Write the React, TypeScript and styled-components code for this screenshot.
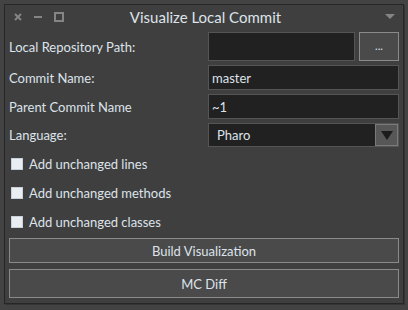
import styled, { createGlobalStyle } from 'styled-components'

// ── Pharo dark theme palette ───────────────────────────────
const C = {
  page: '#434343',
  win: '#3f3f3f',
  frame: '#262626',
  text: '#dde3ea',
  field: '#212121',
  fieldBorder: '#555555',
  button: '#4a4a4a',
  buttonBorder: '#8a8a8a',
  chrome: '#858585',
}

const Global = createGlobalStyle`
  html, body {
    margin: 0;
    padding: 0;
    background: ${C.page};
  }
  body {
    font-family: Lato, 'Noto Sans', sans-serif;
    font-size: 13px;
    color: ${C.text};
  }
`

const Screen = styled.div`
  width: 408px;
  height: 310px;
  padding: 4px 5px 0 4px;
  box-sizing: border-box;
`

const Window = styled.div`
  width: 400px;
  height: 300px;
  box-sizing: border-box;
  background: ${C.win};
  border: 1px solid ${C.frame};
  box-shadow: 1px 1px 0 #353535;
  display: flex;
  flex-direction: column;
`

const TitleBar = styled.div`
  height: 23px;
  display: flex;
  align-items: center;
  padding: 0 8px 0 9px;
  gap: 12px;
`

const Title = styled.div`
  flex: 1;
  text-align: center;
  font-size: 15px;
  margin-right: 38px;
`

const Body = styled.div`
  flex: 1;
  padding: 4px 4px 4px 4px;
  display: flex;
  flex-direction: column;
`

const Row = styled.div<{ $h: number; $gap?: number }>`
  height: ${(p) => p.$h}px;
  margin-bottom: ${(p) => p.$gap ?? 4}px;
  display: grid;
  grid-template-columns: 199px 1fr;
  align-items: center;
`

const Label = styled.div`
  white-space: nowrap;
`

const FieldWrap = styled.div`
  display: flex;
  gap: 4px;
  height: 100%;
`

const Field = styled.div`
  flex: 1;
  box-sizing: border-box;
  background: ${C.field};
  border: 1px solid ${C.fieldBorder};
  display: flex;
  align-items: center;
  padding: 0 3px;
`

const SmallButton = styled.div`
  width: 40px;
  box-sizing: border-box;
  background: ${C.button};
  border: 1px solid ${C.buttonBorder};
  display: flex;
  align-items: center;
  justify-content: center;
  font-size: 11px;
  padding-bottom: 3px;
`

const Select = styled.div`
  flex: 1;
  box-sizing: border-box;
  background: ${C.field};
  border: 1px solid ${C.fieldBorder};
  display: flex;
  align-items: stretch;
`

const SelectText = styled.div`
  flex: 1;
  display: flex;
  align-items: center;
  padding-left: 8px;
`

const SelectArrow = styled.div`
  width: 21px;
  background: #575757;
  border: 1px solid #7a7a7a;
  display: flex;
  align-items: center;
  justify-content: center;
`

const CheckRow = styled.div`
  height: 25px;
  margin-bottom: 4px;
  display: flex;
  align-items: center;
  gap: 6px;
  padding-left: 2px;
`

const Box = styled.div`
  width: 12px;
  height: 12px;
  box-sizing: border-box;
  background: #e9eef3;
  border: 1px solid #c9d0d8;
`

const Button = styled.div<{ $h: number; $gap?: number }>`
  height: ${(p) => p.$h}px;
  margin-bottom: ${(p) => p.$gap ?? 0}px;
  box-sizing: border-box;
  background: ${C.button};
  border: 1px solid ${C.buttonBorder};
  display: flex;
  align-items: center;
  justify-content: center;
`

function CloseIcon() {
  return (
    <svg width="8" height="8" viewBox="0 0 8 8">
      <path d="M1 1L7 7M7 1L1 7" stroke={C.chrome} strokeWidth="2" />
    </svg>
  )
}

function MinIcon() {
  return (
    <svg width="8" height="8" viewBox="0 0 8 8">
      <path d="M0 4H8" stroke={C.chrome} strokeWidth="2" />
    </svg>
  )
}

function MaxIcon() {
  return (
    <svg width="10" height="10" viewBox="0 0 10 10">
      <rect x="1" y="1" width="8" height="8" fill="none" stroke={C.chrome} strokeWidth="2" />
    </svg>
  )
}

function MenuArrow() {
  return (
    <svg width="10" height="5" viewBox="0 0 10 5">
      <path d="M0 0H10L5 5Z" fill={C.chrome} />
    </svg>
  )
}

function DropArrow() {
  return (
    <svg width="12" height="9" viewBox="0 0 12 9">
      <path d="M0 0H12L6 9Z" fill="#1c1c1c" />
    </svg>
  )
}

export default function App() {
  return (
    <Screen>
      <Global />
      <Window>
        <TitleBar>
          <CloseIcon />
          <MinIcon />
          <MaxIcon />
          <Title>Visualize Local Commit</Title>
          <MenuArrow />
        </TitleBar>

        <Body>
          <Row $h={29}>
            <Label>Local Repository Path:</Label>
            <FieldWrap>
              <Field />
              <SmallButton>...</SmallButton>
            </FieldWrap>
          </Row>
          <Row $h={25}>
            <Label>Commit Name:</Label>
            <FieldWrap>
              <Field>master</Field>
            </FieldWrap>
          </Row>
          <Row $h={25}>
            <Label>Parent Commit Name</Label>
            <FieldWrap>
              <Field>~1</Field>
            </FieldWrap>
          </Row>
          <Row $h={24}>
            <Label>Language:</Label>
            <FieldWrap>
              <Select>
                <SelectText>Pharo</SelectText>
                <SelectArrow>
                  <DropArrow />
                </SelectArrow>
              </Select>
            </FieldWrap>
          </Row>

          <CheckRow>
            <Box />
            Add unchanged lines
          </CheckRow>
          <CheckRow>
            <Box />
            Add unchanged methods
          </CheckRow>
          <CheckRow>
            <Box />
            Add unchanged classes
          </CheckRow>

          <Button $h={25} $gap={6}>Build Visualization</Button>
          <Button $h={29}>MC Diff</Button>
        </Body>
      </Window>
    </Screen>
  )
}
